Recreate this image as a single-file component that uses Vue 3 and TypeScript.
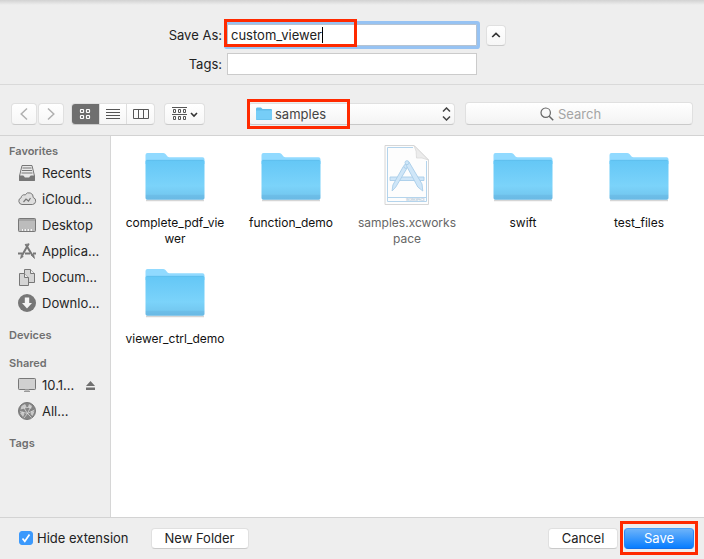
<script setup lang="ts">
import { ref } from 'vue'

interface SidebarItem {
  icon: string
  label: string
  eject?: boolean
}
interface SidebarSection {
  title: string
  items: SidebarItem[]
}
interface FileEntry {
  name: string
  kind: 'folder' | 'workspace'
}

const fileName = ref('custom_viewer')
const tags = ref('')
const search = ref('')
const hideExtension = ref(true)
const view = ref('icons')
const views = ['icons', 'list', 'columns']

const sections: SidebarSection[] = [
  {
    title: 'Favorites',
    items: [
      { icon: 'recents', label: 'Recents' },
      { icon: 'cloud', label: 'iCloud...' },
      { icon: 'desktop', label: 'Desktop' },
      { icon: 'apps', label: 'Applica...' },
      { icon: 'docs', label: 'Docum...' },
      { icon: 'download', label: 'Downlo...' },
    ],
  },
  { title: 'Devices', items: [] },
  {
    title: 'Shared',
    items: [
      { icon: 'display', label: '10.1...', eject: true },
      { icon: 'globe', label: 'All...' },
    ],
  },
  { title: 'Tags', items: [] },
]

const files: FileEntry[] = [
  { name: 'complete_pdf_viewer', kind: 'folder' },
  { name: 'function_demo', kind: 'folder' },
  { name: 'samples.xcworkspace', kind: 'workspace' },
  { name: 'swift', kind: 'folder' },
  { name: 'test_files', kind: 'folder' },
  { name: 'viewer_ctrl_demo', kind: 'folder' },
]
</script>

<template>
  <form class="dialog" @submit.prevent>
    <header class="fields">
      <label for="name">Save As:</label>
      <div class="name-box">
        <input id="name" v-model="fileName" class="field focused" type="text" />
        <span class="caret"></span>
        <span class="mark mark-name"></span>
      </div>
      <button type="button" class="btn expand" aria-label="Collapse">
        <svg width="10" height="6" viewBox="0 0 10 6"><path d="M1.2 5 5 1.4 8.8 5" fill="none" stroke="#333" stroke-width="1.7" /></svg>
      </button>
      <label for="tags">Tags:</label>
      <input id="tags" v-model="tags" class="field" type="text" />
    </header>

    <div class="toolbar">
      <div class="nav">
        <button type="button" class="btn" aria-label="Back">
          <svg width="8" height="14" viewBox="0 0 8 14"><path d="M7 1.5 1.200 7 7 12.500" fill="none" stroke="#b0b0b0" stroke-width="1.5" /></svg>
        </button>
        <button type="button" class="btn" aria-label="Forward">
          <svg width="8" height="14" viewBox="0 0 8 14"><path d="M1 1.5 6.800 7 1 12.500" fill="none" stroke="#b0b0b0" stroke-width="1.5" /></svg>
        </button>
      </div>
      <div class="segments">
        <button v-for="v in views" :key="v" type="button" :class="{ active: view === v }" :aria-label="v" @click="view = v">
          <svg v-if="v === 'icons'" width="12" height="12" viewBox="0 0 12 12" fill="none" stroke="#fff" stroke-width="1.2">
            <rect x="1.5" y="1.5" width="3" height="3" rx=".5" /><rect x="7.5" y="1.5" width="3" height="3" rx=".5" />
            <rect x="1.5" y="7.5" width="3" height="3" rx=".5" /><rect x="7.5" y="7.5" width="3" height="3" rx=".5" />
          </svg>
          <svg v-else-if="v === 'list'" width="14" height="10" viewBox="0 0 14 10" stroke="#555">
            <path d="M0 .5h14M0 3.5h14M0 6.5h14M0 9.5h14" />
          </svg>
          <svg v-else width="16" height="10" viewBox="0 0 16 10" fill="none" stroke="#555">
            <path d="M.5.5h15v9H.5zM5.5.5v9M10.5.5v9" />
          </svg>
        </button>
      </div>
      <button type="button" class="btn group" aria-label="Arrange items">
        <svg width="26" height="14" viewBox="0 0 26 14" fill="none" stroke="#555">
          <path d="M0 .5h15M0 7.5h15" />
          <path d="M1.5 2.5h2v3h-2zM6.5 2.5h2v3h-2zM11.5 2.5h2v3h-2zM1.5 9.5h2v3h-2zM6.5 9.5h2v3h-2zM11.5 9.5h2v3h-2z" />
          <path d="m19 6 3 3 3-3" stroke="#333" stroke-width="1.6" />
        </svg>
      </button>
      <div class="location">
        <svg class="mini" width="16" height="13" viewBox="0 0 16 13">
          <path d="M0 2Q0 .5 1 .5h4l1.5 1.5H15q1 0 1 1v9q0 1-1 1H1q-1 0-1-1z" fill="#62bde9" />
          <path d="M0 3.5h16V12q0 .5-1 .5H1q-1 0-1-.5z" fill="#76cdf7" />
        </svg>
        <select aria-label="Location"><option>samples</option></select>
        <svg class="updown" width="9" height="14" viewBox="0 0 9 14"><path d="M1 4.500 4.500 1 8 4.500M1 9.500 4.500 13 8 9.500" fill="none" stroke="#444" stroke-width="1.5" /></svg>
        <span class="mark mark-location"></span>
      </div>
      <div class="search">
        <svg width="14" height="14" viewBox="0 0 14 14" fill="none" stroke="#666" stroke-width="1.2"><circle cx="5.7" cy="5.7" r="4.7" /><path d="m9.2 9.2 4 4" stroke-width="1.5" /></svg>
        <input v-model="search" type="text" placeholder="Search" aria-label="Search" />
      </div>
    </div>

    <main class="browser">
      <nav class="sidebar">
        <section v-for="s in sections" :key="s.title">
          <h2>{{ s.title }}</h2>
          <a v-for="item in s.items" :key="item.label" href="#" @click.prevent>
            <svg class="side-icon" width="20" height="20" viewBox="0 0 20 20" fill="none" stroke="#777">
              <template v-if="item.icon === 'recents'">
                <path d="M5 2.500h10l2.500 10.500v4q0 .5-.5.5H3q-.5 0-.5-.5v-4z" fill="#e8e8e8" />
                <path d="M5.500 5h9M5 7.500h10M4.500 10h11" />
                <path d="M2.500 13h4q.5 2 1.500 2h4q1 0 1.500-2h4v4.500h-15z" fill="#777" />
              </template>
              <template v-else-if="item.icon === 'cloud'">
                <path d="M5 15.500a3.500 3.500 0 0 1-.8-6.800 3 3 0 0 1 4-2.800 4.300 4.300 0 0 1 8 2.600 3.600 3.600 0 0 1-.7 7z" fill="#dedede" />
                <path d="m6.500 13 2.500-3 2.500 2 2-3" stroke-width="1.2" />
              </template>
              <template v-else-if="item.icon === 'desktop'">
                <rect x="1.5" y="3.5" width="17" height="13" rx=".8" fill="#bcbcbc" />
                <path d="M2 5h16" stroke="#8d8d8d" /><path d="M5 14h10v2H5z" fill="#f2f2f2" stroke="none" />
                <path d="M6 15h1.500m1.500 0h1.500m1.500 0h1.500" stroke="#999" stroke-width="1.400" />
              </template>
              <template v-else-if="item.icon === 'apps'">
                <path d="M1 12.500h4.500M8 12.500h5M16 12.500h3" stroke-width="2" />
                <path d="M11.800 2.500 5 14.500M8.500 3l7 11.500" stroke-width="2" />
                <path d="m4.300 14-.8 3.500 2.800-2zM14.500 14.500l3 3-.8-4z" fill="#777" stroke-width=".7" />
              </template>
              <template v-else-if="item.icon === 'docs'">
                <path d="M7.500 2.500h6l4 4v9h-10z" fill="#d5d5d5" /><path d="M13.500 2.500v4h4" fill="#eee" />
                <path d="M2.500 6.500h5l4 4v8h-9z" fill="#d5d5d5" /><path d="M7.500 6.500v4h4" fill="#eee" />
              </template>
              <template v-else-if="item.icon === 'download'">
                <circle cx="10" cy="10" r="9" fill="#777" stroke="none" />
                <path d="M7.800 4.500h4.400V10H15l-5 5.500L5 10h2.800z" fill="#f5f5f5" stroke="none" />
              </template>
              <template v-else-if="item.icon === 'display'">
                <rect x="1.5" y="3.500" width="17" height="11" rx=".8" fill="#d0d0d0" />
                <path d="M8 14.500h4l.8 2H7.200z" fill="#bbb" stroke="none" /><path d="M7 16.500h6" stroke="#999" />
              </template>
              <template v-else>
                <circle cx="10" cy="10" r="8.500" fill="#858585" />
                <path d="M4.500 5 8 3l1.500 2.500-2 2-4 1zM12 3l3 2-1 3-3-2zM3 12l3-1.500 1.500 2.500-1.500 3zM14.500 10l3 .5-2 4.500-2-2z" fill="#c9c9c9" stroke="none" />
                <path d="M10.500 12.500 7 7M10.500 12.500 13.500 6M10.500 12.500 3 10.500M10.500 12.500 17.500 9M10.500 12.500 7 17M10.500 12.500l4 4M7 7l6.500-1" stroke="#e2e2e2" stroke-width=".7" />
              </template>
            </svg>
            <span>{{ item.label }}</span>
            <svg v-if="item.eject" class="eject" width="9" height="9" viewBox="0 0 9 9" fill="#707070"><path d="M4.500 0 9 5H0zM0 6.500h9V9H0z" /></svg>
          </a>
        </section>
      </nav>

      <ul class="files">
        <li v-for="f in files" :key="f.name" :class="f.kind">
          <svg v-if="f.kind === 'folder'" width="64" height="64" viewBox="0 0 64 64">
            <defs>
              <linearGradient id="folderFace" x1="0" y1="0" x2="0" y2="1">
                <stop offset="0" stop-color="#64c7f6" /><stop offset=".65" stop-color="#7bd3fa" />
                <stop offset=".86" stop-color="#74c9f1" /><stop offset=".89" stop-color="#6dbee8" /><stop offset="1" stop-color="#69b9e4" />
              </linearGradient>
            </defs>
            <path d="M3 56.500h58" stroke="#d5d5d5" stroke-width="1.5" />
            <path d="M2.500 11q0-2 2-2H20q1.500 0 2.500 1l2 2.500q.8.800 2 .8H59.500q2 0 2 2V20h-59z" fill="#91daff" />
            <path d="M2.500 17.500q0-1.500 1.500-1.500h56q1.500 0 1.500 1.500V54q0 1.800-1.800 1.800H4.300q-1.800 0-1.800-1.800z" fill="url(#folderFace)" />
            <path d="M3.500 16.300h57" stroke="#5dbbe9" stroke-width=".7" />
          </svg>
          <svg v-else width="64" height="64" viewBox="0 0 64 64">
            <path d="M10 1.500h29L53.500 16v44.500H10z" fill="#fdfdfd" stroke="#d6d6d6" />
            <path d="M38 3.500H12.500v54h39V17M12.500 53.500h39" fill="none" stroke="#b4d4ec" />
            <path d="M39 1.500 53.500 16q-7-3-12-2Q42 7 39 1.500z" fill="#ececec" stroke="#d4d4d4" stroke-width=".7" />
            <g fill="#cfe6f8" stroke="#a8cde9" stroke-width=".9">
              <path d="M15 33h34v3.500H15z" />
              <path d="m28.300 22.500 3.500 2-11 18.500-3.700 4 .8-6z" /><circle cx="30.800" cy="22.300" r="2" />
              <path d="m30.500 20 3.500-2 13 22 .8 7-5-4z" /><circle cx="32" cy="18.700" r="2" />
            </g>
            <text x="31" y="57" font-size="3" fill="#8caec7">WORKSPACE</text>
          </svg>
          <span>{{ f.name }}</span>
        </li>
      </ul>
    </main>

    <footer class="actions">
      <label class="check">
        <input v-model="hideExtension" type="checkbox" />
        <svg width="14" height="14" viewBox="0 0 14 14"><path d="m3.500 7.500 2.300 2.800L10.500 3.500" fill="none" stroke="#fff" stroke-width="1.7" /></svg>
        Hide extension
      </label>
      <button type="button" class="btn push new">New Folder</button>
      <button type="button" class="btn push">Cancel</button>
      <div class="save-box">
        <button type="submit" class="btn push primary">Save</button>
        <span class="mark mark-save"></span>
      </div>
    </footer>
  </form>
</template>

<style>
body {
  margin: 0;
}
</style>

<style scoped>
* {
  box-sizing: border-box;
}
.dialog {
  display: flex;
  flex-direction: column;
  min-height: 100vh;
  background: #eeeeee;
  color: #222;
  font: 13px/16px Inter, 'Liberation Sans', sans-serif;
}
input,
select,
button {
  margin: 0;
  font: inherit;
  color: inherit;
}
svg {
  display: block;
  flex: none;
}
.fields {
  display: grid;
  grid-template-columns: 1fr 250px 1fr;
  grid-auto-rows: 22px;
  gap: 7px 5px;
  align-items: center;
  padding: 24px 0 9px;
  border-bottom: 1px solid #d9d9d9;
  background: linear-gradient(#d2d2d2, #eeeeee 5px);
}
.fields > label {
  text-align: right;
}
.name-box {
  position: relative;
}
.field {
  display: block;
  width: 100%;
  height: 22px;
  padding: 0 3px;
  border: 1px solid #cbcbcb;
  border-radius: 0;
  background: #fff;
  outline: none;
}
.focused {
  border-color: #b5c3d2;
  box-shadow: 0 0 0 3px #97c3f3;
  border-radius: 1px;
}
.caret {
  position: absolute;
  left: 95px;
  top: 3px;
  width: 1px;
  height: 16px;
  background: #000;
}
.mark {
  position: absolute;
  border: 3px solid #ff2a00;
  pointer-events: none;
}
.mark-name {
  left: -3px;
  top: -5px;
  width: 133px;
  height: 28px;
}
.btn,
.segments {
  display: flex;
  align-items: center;
  justify-content: center;
  padding: 0;
  border: 1px solid #e0e0e0;
  border-bottom-color: #cacaca;
  border-radius: 4px;
  background: linear-gradient(#fff, #f6f6f6);
}
.expand {
  width: 20px;
  height: 21px;
  margin-left: 4px;
}
.toolbar {
  display: flex;
  align-items: center;
  height: 51px;
  padding: 7px 11px 0 11px;
  border-bottom: 1px solid #d3d3d3;
}
.nav {
  display: flex;
  gap: 1px;
}
.nav .btn {
  width: 26px;
  height: 22px;
}
.segments {
  height: 22px;
  width: 84px;
  margin: 0 9px 0 7px;
  overflow: hidden;
}
.segments button {
  display: flex;
  flex: 1;
  align-items: center;
  justify-content: center;
  align-self: stretch;
  padding: 0;
  border: 0;
  border-left: 1px solid #dedede;
  background: none;
}
.segments .active {
  border: 0;
  background: #6f6f6f;
}
.group {
  width: 41px;
  height: 22px;
}
.location {
  position: relative;
  display: flex;
  flex: 0 0 207px;
  align-items: center;
  height: 22px;
  margin: 0 10px 0 43px;
}
.location select {
  width: 100%;
  height: 22px;
  padding: 0 24px 0 26px;
  appearance: none;
  border: 1px solid #e0e0e0;
  border-bottom-color: #c8c8c8;
  border-radius: 4px;
  background: linear-gradient(#fff, #f4f4f4);
  color: #444;
}
.mini {
  position: absolute;
  left: 8px;
  pointer-events: none;
}
.updown {
  position: absolute;
  right: 4px;
  pointer-events: none;
}
.mark-location {
  left: -1px;
  top: -4px;
  width: 103px;
  height: 30px;
}
.search {
  display: flex;
  flex: 1;
  align-items: center;
  justify-content: center;
  gap: 4px;
  height: 23px;
  border: 1px solid #e0e0e0;
  border-bottom-color: #cacaca;
  border-radius: 4px;
  background: linear-gradient(#fff, #f3f3f3);
}
.search input {
  width: 60px;
  padding: 0;
  border: 0;
  background: none;
  outline: none;
}
.search input::placeholder {
  color: #a4a4a4;
  opacity: 1;
}
.browser {
  display: flex;
  flex: 1;
}
.sidebar {
  flex: 0 0 111px;
  padding: 6px 0 0 9px;
  border-right: 1px solid #d6d6d6;
}
.sidebar section {
  margin-bottom: 10px;
}
.sidebar h2 {
  margin: 0;
  color: #707070;
  font-size: 11px;
  font-weight: 600;
  line-height: 18px;
}
.sidebar a {
  display: flex;
  align-items: center;
  gap: 5px;
  height: 26px;
  padding-left: 8px;
  color: #262626;
  text-decoration: none;
  white-space: nowrap;
}
.eject {
  margin: 0 15px 0 auto;
}
.files {
  display: grid;
  flex: 1;
  grid-template-columns: repeat(auto-fill, 116px);
  grid-auto-rows: 116px;
  align-content: start;
  margin: 0;
  padding: 8px 0 0 6px;
  background: #fff;
  list-style: none;
}
.files li {
  display: flex;
  flex-direction: column;
  align-items: center;
  gap: 7px;
}
.files span {
  width: 100px;
  color: #111;
  font-size: 12px;
  line-height: 16px;
  text-align: center;
  word-break: break-all;
}
.files .workspace span {
  color: #666;
}
.actions {
  display: flex;
  align-items: center;
  height: 42px;
  padding: 0 10px 1px 19px;
  border-top: 1px solid #d3d3d3;
}
.check {
  position: relative;
  display: flex;
  align-items: center;
  gap: 4px;
  white-space: nowrap;
}
.check input {
  width: 14px;
  height: 14px;
  appearance: none;
  border: 1px solid #bbb;
  border-radius: 3px;
  background: #fff;
}
.check input:checked {
  border-color: #3b99fc;
  background: #3b99fc;
}
.check svg {
  position: absolute;
  left: 0;
  pointer-events: none;
}
.push {
  width: 70px;
  height: 21px;
  background: #fff;
}
.new {
  width: 98px;
  margin: 0 auto 0 22px;
}
.save-box {
  position: relative;
  margin-left: 6px;
}
.primary {
  border-color: #4ba0f8 #2a86f6 #1470e8;
  background: linear-gradient(#6cb3fa, #077dff);
  color: #fff;
}
.mark-save {
  left: -4px;
  top: -7px;
  width: 78px;
  height: 34px;
}
</style>
